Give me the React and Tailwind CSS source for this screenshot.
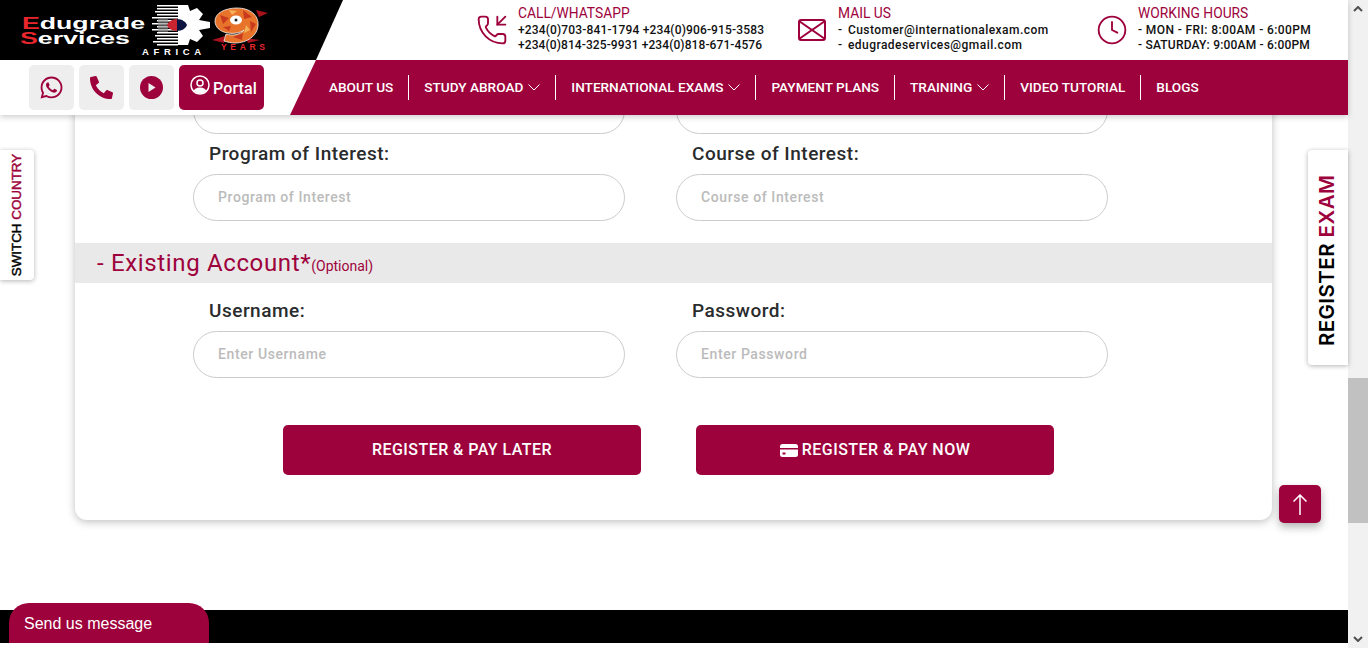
import { Clock, PhoneIncoming } from 'lucide-react';
import { FaPhoneAlt, FaWhatsapp } from 'react-icons/fa';

const din = "font-['Roboto',sans-serif]";

const navItems = [
  { label: 'ABOUT US' },
  { label: 'STUDY ABROAD', caret: true },
  { label: 'INTERNATIONAL EXAMS', caret: true },
  { label: 'PAYMENT PLANS' },
  { label: 'TRAINING', caret: true },
  { label: 'VIDEO TUTORIAL' },
  { label: 'BLOGS' },
];

const barcode = [
  [157, 5], [157, 8], [155, 11], [157, 14], [152, 17], [157, 20], [152, 23],
  [157, 26], [152, 29], [157, 32], [155, 35], [157, 38], [153, 41], [157, 44],
];

const Logo = () => (
  <svg width="300" height="60" viewBox="0 0 300 60" className="shrink-0">
    <g fontFamily="Liberation Sans, sans-serif" fontWeight="700">
      <text x="22" y="28.500" fontSize="16" fill="#fff" textLength="123" lengthAdjust="spacingAndGlyphs">
        <tspan fill="#e8262c">E</tspan>dugrade
      </text>
      <text x="20" y="44" fontSize="16" fill="#fff" textLength="110" lengthAdjust="spacingAndGlyphs">
        <tspan fill="#e8262c">S</tspan>ervices
      </text>
      <text x="142" y="55" fontSize="9.500" fill="#fff" textLength="59" lengthAdjust="spacing">AFRICA</text>
      <text x="221" y="50" fontSize="8.500" fill="#e8262c" textLength="44" lengthAdjust="spacing">YEARS</text>
    </g>
    <path
      d="M178 5h10l2 6 7-3 6 6-4 6 11 2v6l-11 2 4 6-6 6-7-3-2 6h-10z"
      fill="#fff"
    />
    <g fill="#fff">
      {barcode.map(([x, y]) => (
        <rect key={y} x={x} y={y} width={178 - x} height="1.500" />
      ))}
    </g>
    <rect x="158" y="18" width="10" height="14" fill="#8a8a8a" opacity="0.6" />
    <path d="M177 19c-5 0-9 3-10 6 1 3 5 6 10 6z" fill="#c9242f" />
    <path d="M177 19c5 0 9 3 10 6-1 3-5 6-10 6z" fill="#0d1440" />
    <path d="M256 10l12 3-9 4zM212 40l13-4-1 7zM246 38l14 2-12 3z" fill="#a8121c" />
    <path
      d="M237 8c13 0 22 7 21 18-1 10-11 17-23 17-4 0-8-1-11-2l2-7c6 2 14 1 18-4-4 3-11 4-16 3-8-1-13-6-13-12 0-8 10-13 22-13z"
      fill="#e8742c"
      stroke="#fff"
      strokeWidth="0.750"
    />
    <path d="M220 15l9 3-6 6zM243 10l9 7-8 2zM250 21l6 3-5 8zM233 37l10-4-1 7zM223 27l8-1-2 5z" fill="#c93a1e" />
    <path d="M229 10l8 1-5 4zM246 25l4 5-6 3z" fill="#f4b25a" />
    <ellipse cx="236" cy="20" rx="6" ry="4.500" fill="#fff" />
    <circle cx="236" cy="20" r="1.500" fill="#222" />
  </svg>
);

const Contact = ({ icon, title, lines, className }) => (
  <div className={`flex items-center ${className}`}>
    <div className="w-[40px] shrink-0 text-[#9e023c]">{icon}</div>
    <div className={`mb-[3px] ${din}`}>
      <p className="text-[13.8px] leading-[17px] text-[#9e023c]">{title}</p>
      <div className="pt-[1px]">
        {lines.map((line) => (
          <p key={line.text} className={`text-[12px] leading-[15px] text-[#111] font-medium ${line.tracking}`}>
            {line.text}
          </p>
        ))}
      </div>
    </div>
  </div>
);

const Input = ({ placeholder }) => (
  <div className="h-[47px] flex items-center rounded-full border border-[#ccc] bg-white pl-[24px] text-[14px] tracking-[0.6px] text-[#bbb] font-medium">
    {placeholder}
  </div>
);

const Field = ({ label, placeholder }) => (
  <div>
    <p className="pl-4 mb-[7px] text-[19px] leading-[27px] tracking-[0.5px] font-medium text-[#292b2c]">{label}</p>
    <Input placeholder={placeholder} />
  </div>
);

const Caret = () => (
  <svg width="12" height="7" viewBox="0 0 12 7" fill="none" stroke="currentColor" strokeWidth="1">
    <path d="M.5.5L6 6 11.500.5" />
  </svg>
);

const App = () => {
  return (
    <div className="flex h-[648px] w-[1368px] overflow-hidden bg-white">
      <div className="relative flex w-[1348px] flex-col">
        <header className="relative z-10 shadow-[0_2px_6px_rgba(0,0,0,0.2)] bg-white">
          <div className="flex h-[60px]">
            <div className="w-[343px] shrink-0 bg-black [clip-path:polygon(0_0,100%_0,316px_100%,0_100%)]">
              <Logo />
            </div>
            <div className="flex items-center pl-[135px]">
              <Contact
                className="w-[320px]"
                icon={<PhoneIncoming size={32} strokeWidth={1.4} className="-ml-[2px]" />}
                title="CALL/WHATSAPP"
                lines={[
                  { text: '+234(0)703-841-1794 +234(0)906-915-3583', tracking: 'tracking-[0.15px]' },
                  { text: '+234(0)814-325-9931 +234(0)818-671-4576', tracking: 'tracking-[0.1px]' },
                ]}
              />
              <Contact
                className="w-[300px]"
                icon={
                  <svg width="28" height="22" viewBox="0 0 28 22" fill="none" stroke="currentColor" strokeWidth="2">
                    <rect x="1" y="1" width="26" height="20" rx="2" />
                    <path d="M1 2l13 9 13-9M1 20l13-9 13 9" />
                  </svg>
                }
                title="MAIL US"
                lines={[
                  { text: '- Customer@internationalexam.com', tracking: 'tracking-[0.45px] [word-spacing:2px]' },
                  { text: '- edugradeservices@gmail.com', tracking: 'tracking-[0.45px] [word-spacing:2px]' },
                ]}
              />
              <Contact
                icon={<Clock size={32} strokeWidth={1.4} className="-ml-[2px]" />}
                title="WORKING HOURS"
                lines={[
                  { text: '- MON - FRI: 8:00AM - 6:00PM', tracking: 'tracking-[0.4px]' },
                  { text: '- SATURDAY: 9:00AM - 6:00PM', tracking: 'tracking-[0.2px]' },
                ]}
              />
            </div>
          </div>
          <div className="flex h-[55px]">
            <div className="flex w-[290px] shrink-0 items-center gap-[5px] pl-[29px]">
              <a className="flex h-[45px] w-[45px] items-center justify-center rounded-[5px] bg-[#eeeeee] text-[#9e023c]">
                <FaWhatsapp size={25} />
              </a>
              <a className="flex h-[45px] w-[45px] items-center justify-center rounded-[5px] bg-[#eeeeee] text-[#9e023c]">
                <FaPhoneAlt size={23} />
              </a>
              <a className="flex h-[45px] w-[45px] items-center justify-center rounded-[5px] bg-[#eeeeee] text-[#9e023c]">
                <svg width="23" height="23" viewBox="0 0 23 23">
                  <circle cx="11.500" cy="11.500" r="11.500" fill="currentColor" />
                  <path d="M8.500 7l7 4.500-7 4.500z" fill="#eeeeee" />
                </svg>
              </a>
              <a className={`flex h-[45px] w-[85px] items-center gap-[3px] rounded-[5px] bg-[#9e023c] pl-[11px] text-white ${din}`}>
                <svg width="20" height="20" viewBox="0 0 20 20" className="-mt-[5px]">
                  <defs>
                    <clipPath id="portal-ring">
                      <circle cx="10" cy="10" r="8.500" />
                    </clipPath>
                  </defs>
                  <circle cx="10" cy="10" r="9" fill="none" stroke="#fff" strokeWidth="1.500" />
                  <circle cx="10" cy="8" r="3" fill="none" stroke="#fff" strokeWidth="1.500" />
                  <ellipse cx="10" cy="17" rx="6.500" ry="4.500" fill="#fff" clipPath="url(#portal-ring)" />
                </svg>
                <span className="mt-[2px] text-[16px] font-medium tracking-[0.1px]">Portal</span>
              </a>
            </div>
            <nav className={`flex flex-1 items-center bg-[#9e023c] pl-[24px] [clip-path:polygon(26px_0,100%_0,100%_100%,0_100%)] ${din}`}>
              {navItems.map((item, i) => (
                <a
                  key={item.label}
                  className={`flex h-[25px] items-center gap-[5px] px-[15px] text-[13.6px] font-medium text-white ${
                    i < navItems.length - 1 ? 'border-r border-white' : ''
                  }`}
                >
                  {item.label}
                  {item.caret && <Caret />}
                </a>
              ))}
            </nav>
          </div>
        </header>

        <main className={`flex-1 overflow-hidden ${din}`}>
          <section className="ml-[75px] w-[1197px] rounded-b-[12px] bg-white pb-[45px] shadow-[0_2px_8px_rgba(0,0,0,0.25)]">
            <div className="ml-[118px] -mt-[28px] grid w-[915px] grid-cols-[432px_432px] gap-x-[51px]">
              <Input />
              <Input />
            </div>
            <div className="ml-[118px] mt-[6px] grid w-[915px] grid-cols-[432px_432px] gap-x-[51px]">
              <Field label="Program of Interest:" placeholder="Program of Interest" />
              <Field label="Course of Interest:" placeholder="Course of Interest" />
            </div>
            <div className="mt-[22px] flex h-[40px] items-center bg-[#e9e9e9] pl-[22px] text-[#9e023c]">
              <span className="text-[24px] tracking-[0.65px]">- Existing Account*</span>
              <span className="mt-[7px] text-[14px]">(Optional)</span>
            </div>
            <div className="ml-[118px] mt-[14px] grid w-[915px] grid-cols-[432px_432px] gap-x-[51px]">
              <Field label="Username:" placeholder="Enter Username" />
              <Field label="Password:" placeholder="Enter Password" />
            </div>
            <div className="ml-[208px] mt-[47px] flex gap-[55px]">
              <button className="h-[50px] w-[358px] rounded-[5px] bg-[#9e023c] text-[16px] font-medium tracking-[0.45px] text-white">
                REGISTER &amp; PAY LATER
              </button>
              <button className="flex h-[50px] w-[358px] items-center justify-center gap-[4px] rounded-[5px] bg-[#9e023c] text-[16px] font-medium tracking-[0.45px] text-white">
                <svg width="18" height="13" viewBox="0 0 18 13">
                  <rect width="18" height="13" rx="2.500" fill="#fff" />
                  <rect y="4" width="18" height="1.500" fill="#9e023c" />
                  <rect x="2.500" y="8.500" width="3" height="2" fill="#9e023c" />
                </svg>
                REGISTER &amp; PAY NOW
              </button>
            </div>
          </section>
        </main>

        <footer className="mb-[5px] h-[33px] bg-black" />

        <div className="absolute left-0 top-[150px] z-20 flex h-[130px] w-[34px] items-center justify-center rounded-r-[4px] bg-white shadow-[0_1px_5px_rgba(0,0,0,0.3)]">
          <span className="whitespace-nowrap -rotate-90 font-['Liberation_Sans',sans-serif] text-[13.4px] [-webkit-text-stroke:0.45px_currentColor] text-black">
            SWITCH <span className="text-[#9e023c]">COUNTRY</span>
          </span>
        </div>

        <div className="absolute right-0 top-[150px] z-20 flex h-[215px] w-[40px] items-center justify-center rounded-l-[4px] bg-white shadow-[0_1px_5px_rgba(0,0,0,0.3)]">
          <span className="mt-[6px] whitespace-nowrap -rotate-90 font-['Inter',sans-serif] text-[20.500px] font-semibold tracking-[0.45px] text-black">
            REGISTER <span className="text-[#9e023c]">EXAM</span>
          </span>
        </div>

        <a className="absolute left-[1279px] top-[485px] z-20 flex h-[38px] w-[42px] items-center justify-center rounded-[5px] bg-[#9e023c] text-white shadow-[0_4px_8px_rgba(0,0,0,0.3)]">
          <svg width="14" height="21" viewBox="0 0 14 21" fill="none" stroke="currentColor" strokeWidth="1.500">
            <path d="M7 21V1M.5 7.500L7 1l6.500 6.500" />
          </svg>
        </a>

        <div className="absolute bottom-[5px] left-[9px] z-20 flex h-[40px] w-[200px] items-center rounded-t-[20px] bg-[#9e023c] pl-[15px] pt-[1px] font-['Liberation_Sans',sans-serif] text-[16px] text-white">
          Send us message
        </div>
      </div>

      <div className="relative w-[20px] shrink-0 bg-[#f1f1f1]">
        <svg className="absolute left-[5px] top-[6px]" width="10" height="6" viewBox="0 0 10 6">
          <path d="M1 5l4-4 4 4" fill="none" stroke="#505050" strokeWidth="2" />
        </svg>
        <div className="absolute left-0 top-[378px] h-[145px] w-full bg-[#c1c1c1]" />
        <svg className="absolute bottom-[6px] left-[5px]" width="10" height="6" viewBox="0 0 10 6">
          <path d="M1 1l4 4 4-4" fill="none" stroke="#505050" strokeWidth="2" />
        </svg>
      </div>
    </div>
  );
};

export default App;
